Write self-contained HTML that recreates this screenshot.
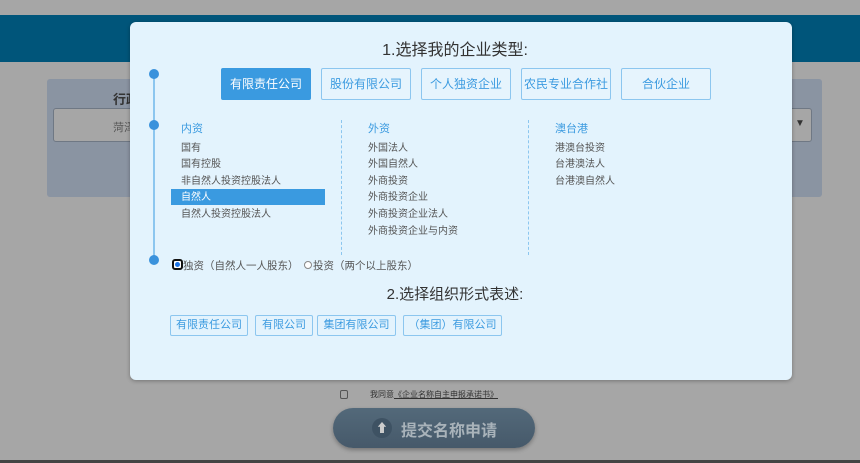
<!DOCTYPE html>
<html><head><meta charset="utf-8"><style>
*{margin:0;padding:0;box-sizing:border-box}
body{width:860px;height:463px;background:#a6a6a6;position:relative;overflow:hidden;font-family:"Liberation Sans","Noto Sans CJK SC",sans-serif}
.a{position:absolute}
.btn{position:absolute;top:68px;height:32px;width:90px;border:1px solid #8cc6ef;border-radius:2px;color:#3c9be0;font-size:12px;line-height:30px;text-align:center;background:#e6f4fd}
.btn.on{background:#3a9ae0;color:#fff;border-color:#3a9ae0}
.col{position:absolute;top:121px;font-size:10px;color:#555;line-height:16.6px}
.col .h{color:#3c9be0;font-size:11px;margin-bottom:3px}
.dot{position:absolute;left:149px;width:10px;height:10px;border-radius:50%;background:#3a92dc}
.b2{position:absolute;top:315px;height:21px;border:1px solid #8cc6ef;border-radius:2px;color:#3c9be0;font-size:11px;line-height:19px;text-align:center}
</style></head><body>
<div class="a" style="left:0;top:15px;width:860px;height:47px;background:#00557a"></div>
<div class="a" style="left:47px;top:79px;width:775px;height:118px;background:#8a94a2;border-radius:3px"></div>
<div class="a" style="left:113px;top:89px;font-size:13px;font-weight:bold;color:#333">行政</div>
<div class="a" style="left:53px;top:108px;width:759px;height:34px;border:1px solid #6f7884;border-radius:3px;background:#a6a6a6"></div>
<div class="a" style="left:113px;top:119px;font-size:11px;color:#555">菏泽</div>
<div class="a" style="left:795px;top:118px;font-size:10px;color:#333">▼</div>
<div class="a" style="left:130px;top:22px;width:662px;height:358px;background:#e3f3fd;border-radius:6px;box-shadow:0 1px 4px rgba(0,0,0,.3)"></div>
<div class="a" style="left:130px;top:36px;width:650px;text-align:center;font-size:16px;color:#333">1.选择我的企业类型:</div>
<div class="a" style="left:153px;top:74px;width:2px;height:186px;background:#8cc6ef"></div>
<div class="dot" style="top:69px"></div><div class="dot" style="top:120px"></div><div class="dot" style="top:255px"></div>
<div class="btn on" style="left:221px">有限责任公司</div>
<div class="btn" style="left:321px">股份有限公司</div>
<div class="btn" style="left:421px">个人独资企业</div>
<div class="btn" style="left:521px">农民专业合作社</div>
<div class="btn" style="left:621px">合伙企业</div>
<div class="a" style="left:171px;top:189px;width:154px;height:16px;background:#3a9ae0"></div>
<div class="col" style="left:181px"><div class="h">内资</div>国有<br>国有控股<br>非自然人投资控股法人<br><span style="color:#fff">自然人</span><br>自然人投资控股法人</div>
<div class="a" style="left:341px;top:120px;height:135px;border-left:1px dashed #8cc6ef"></div>
<div class="col" style="left:368px"><div class="h">外资</div>外国法人<br>外国自然人<br>外商投资<br>外商投资企业<br>外商投资企业法人<br>外商投资企业与内资</div>
<div class="a" style="left:528px;top:120px;height:135px;border-left:1px dashed #8cc6ef"></div>
<div class="col" style="left:555px"><div class="h">澳台港</div>港澳台投资<br>台港澳法人<br>台港澳自然人</div>
<div class="a" style="left:172px;top:259px;width:11px;height:11px;border:2px solid #111;border-radius:3px;background:#fff"><div style="margin:1px;width:5px;height:5px;border-radius:50%;background:#1a73e8"></div></div>
<div class="a" style="left:183px;top:258px;font-size:10.5px;color:#555">独资（自然人一人股东）</div>
<div class="a" style="left:304px;top:261px;width:8px;height:8px;border:1px solid #888;border-radius:50%;background:#fff"></div>
<div class="a" style="left:313px;top:258px;font-size:10.5px;color:#555">投资（两个以上股东）</div>
<div class="a" style="left:130px;top:283px;width:650px;text-align:center;font-size:15px;color:#333">2.选择组织形式表述:</div>
<div class="b2" style="left:170px;width:78px">有限责任公司</div>
<div class="b2" style="left:255px;width:58px">有限公司</div>
<div class="b2" style="left:317px;width:79px">集团有限公司</div>
<div class="b2" style="left:403px;width:99px">（集团）有限公司</div>
<div class="a" style="left:340px;top:390px;width:8px;height:9px;border:1px solid #555;border-radius:2px"></div>
<div class="a" style="left:370px;top:389px;font-size:8px;color:#333">我同意<span style="text-decoration:underline">《企业名称自主申报承诺书》</span></div>
<div class="a" style="left:333px;top:408px;width:202px;height:40px;border-radius:20px;background:linear-gradient(#53697a,#46596a);box-shadow:0 2px 4px rgba(0,0,0,.3)"></div>
<div class="a" style="left:372px;top:418px;width:20px;height:20px;border-radius:50%;background:#3e5263;color:#ccc;font-size:12px;text-align:center;line-height:20px">⬆</div>
<div class="a" style="left:401px;top:417px;font-size:16px;font-weight:bold;color:#a9b3ba">提交名称申请</div>
<div class="a" style="left:0;top:460px;width:860px;height:3px;background:#444"></div>
</body></html>
